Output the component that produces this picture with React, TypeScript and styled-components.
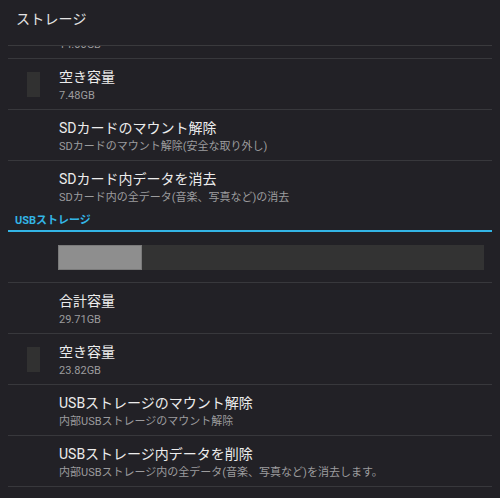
import React from "react";
import styled, { createGlobalStyle } from "styled-components";

const Global = createGlobalStyle`
  html, body { margin: 0; padding: 0; background: #222126; }
  body { font-family: Roboto, "Noto Sans CJK JP", sans-serif; }
`;

const Screen = styled.div`
  width: 500px;
  height: 498px;
  background: #222126;
  display: flex;
  flex-direction: column;
  overflow: hidden;
`;

const ActionBar = styled.header`
  height: 46px;
  flex: none;
  margin: 0 8px;
  display: flex;
  align-items: center;
  padding: 0 0 9px 8px;
  box-sizing: border-box;
  border-bottom: 1px solid #3a3a3d;
  color: #e4e4e4;
  font-size: 14px;
  letter-spacing: 0.2px;
`;

const Viewport = styled.div`
  flex: 1;
  overflow: hidden;
`;

const List = styled.div`
  margin: -38px 8px 0 8px;
  display: flex;
  flex-direction: column;
`;

const Row = styled.div<{ $last?: boolean }>`
  height: 51px;
  box-sizing: border-box;
  display: grid;
  grid-template-columns: 51px 1fr;
  align-items: start;
  border-bottom: 1px solid ${(p) => (p.$last ? "transparent" : "#38383c")};
`;

const IconCell = styled.div`
  padding-top: 13px;
  padding-left: 19px;
`;

const Swatch = styled.div`
  width: 13px;
  height: 25px;
  background: #313131;
`;

const Texts = styled.div`
  padding-top: 8px;
  display: flex;
  flex-direction: column;
`;

const Title = styled.div`
  font-size: 14px;
  line-height: 20px;
  height: 20px;
  color: #ececec;
  white-space: nowrap;
`;

const Summary = styled.div`
  font-size: 11px;
  line-height: 16px;
  margin-top: 1px;
  color: #9c9c9e;
  white-space: nowrap;
`;

const Category = styled.div`
  height: 20px;
  box-sizing: border-box;
  border-bottom: 2px solid #33b5e5;
  color: #33b5e5;
  font-size: 11px;
  font-weight: bold;
  line-height: 18px;
  padding-left: 7px;
`;

const BarRow = styled.div`
  height: 51px;
  box-sizing: border-box;
  padding: 13px 8px 0 50px;
  border-bottom: 1px solid #38383c;
`;

const Track = styled.div`
  height: 25px;
  background: #333333;
  display: flex;
`;

const Fill = styled.div`
  height: 100%;
  background: #8e8e8e;
  box-shadow: inset 0 0 0 1px #7a7a7a;
`;

type Item = { title: string; summary: string; swatch?: boolean; last?: boolean };

const sd: Item[] = [
  { title: "", summary: "14.00GB" },
  { title: "空き容量", summary: "7.48GB", swatch: true },
  { title: "SDカードのマウント解除", summary: "SDカードのマウント解除(安全な取り外し)" },
  { title: "SDカード内データを消去", summary: "SDカード内の全データ(音楽、写真など)の消去", last: true },
];

const usb: Item[] = [
  { title: "合計容量", summary: "29.71GB" },
  { title: "空き容量", summary: "23.82GB", swatch: true },
  { title: "USBストレージのマウント解除", summary: "内部USBストレージのマウント解除" },
  { title: "USBストレージ内データを削除", summary: "内部USBストレージ内の全データ(音楽、写真など)を消去します。" },
];

const Pref = ({ item }: { item: Item }) => (
  <Row $last={item.last}>
    <IconCell>{item.swatch && <Swatch />}</IconCell>
    <Texts>
      <Title>{item.title}</Title>
      <Summary>{item.summary}</Summary>
    </Texts>
  </Row>
);

export default function App() {
  const total = 29.71;
  const free = 23.82;
  const used = ((total - free) / total) * 100;
  return (
    <>
      <Global />
      <Screen>
        <ActionBar>ストレージ</ActionBar>
        <Viewport>
          <List>
            {sd.map((it, i) => (
              <Pref key={"sd" + i} item={it} />
            ))}
            <Category>USBストレージ</Category>
            <BarRow>
              <Track>
                <Fill style={{ width: `${used}%` }} />
              </Track>
            </BarRow>
            {usb.map((it, i) => (
              <Pref key={"usb" + i} item={it} />
            ))}
          </List>
        </Viewport>
      </Screen>
    </>
  );
}
